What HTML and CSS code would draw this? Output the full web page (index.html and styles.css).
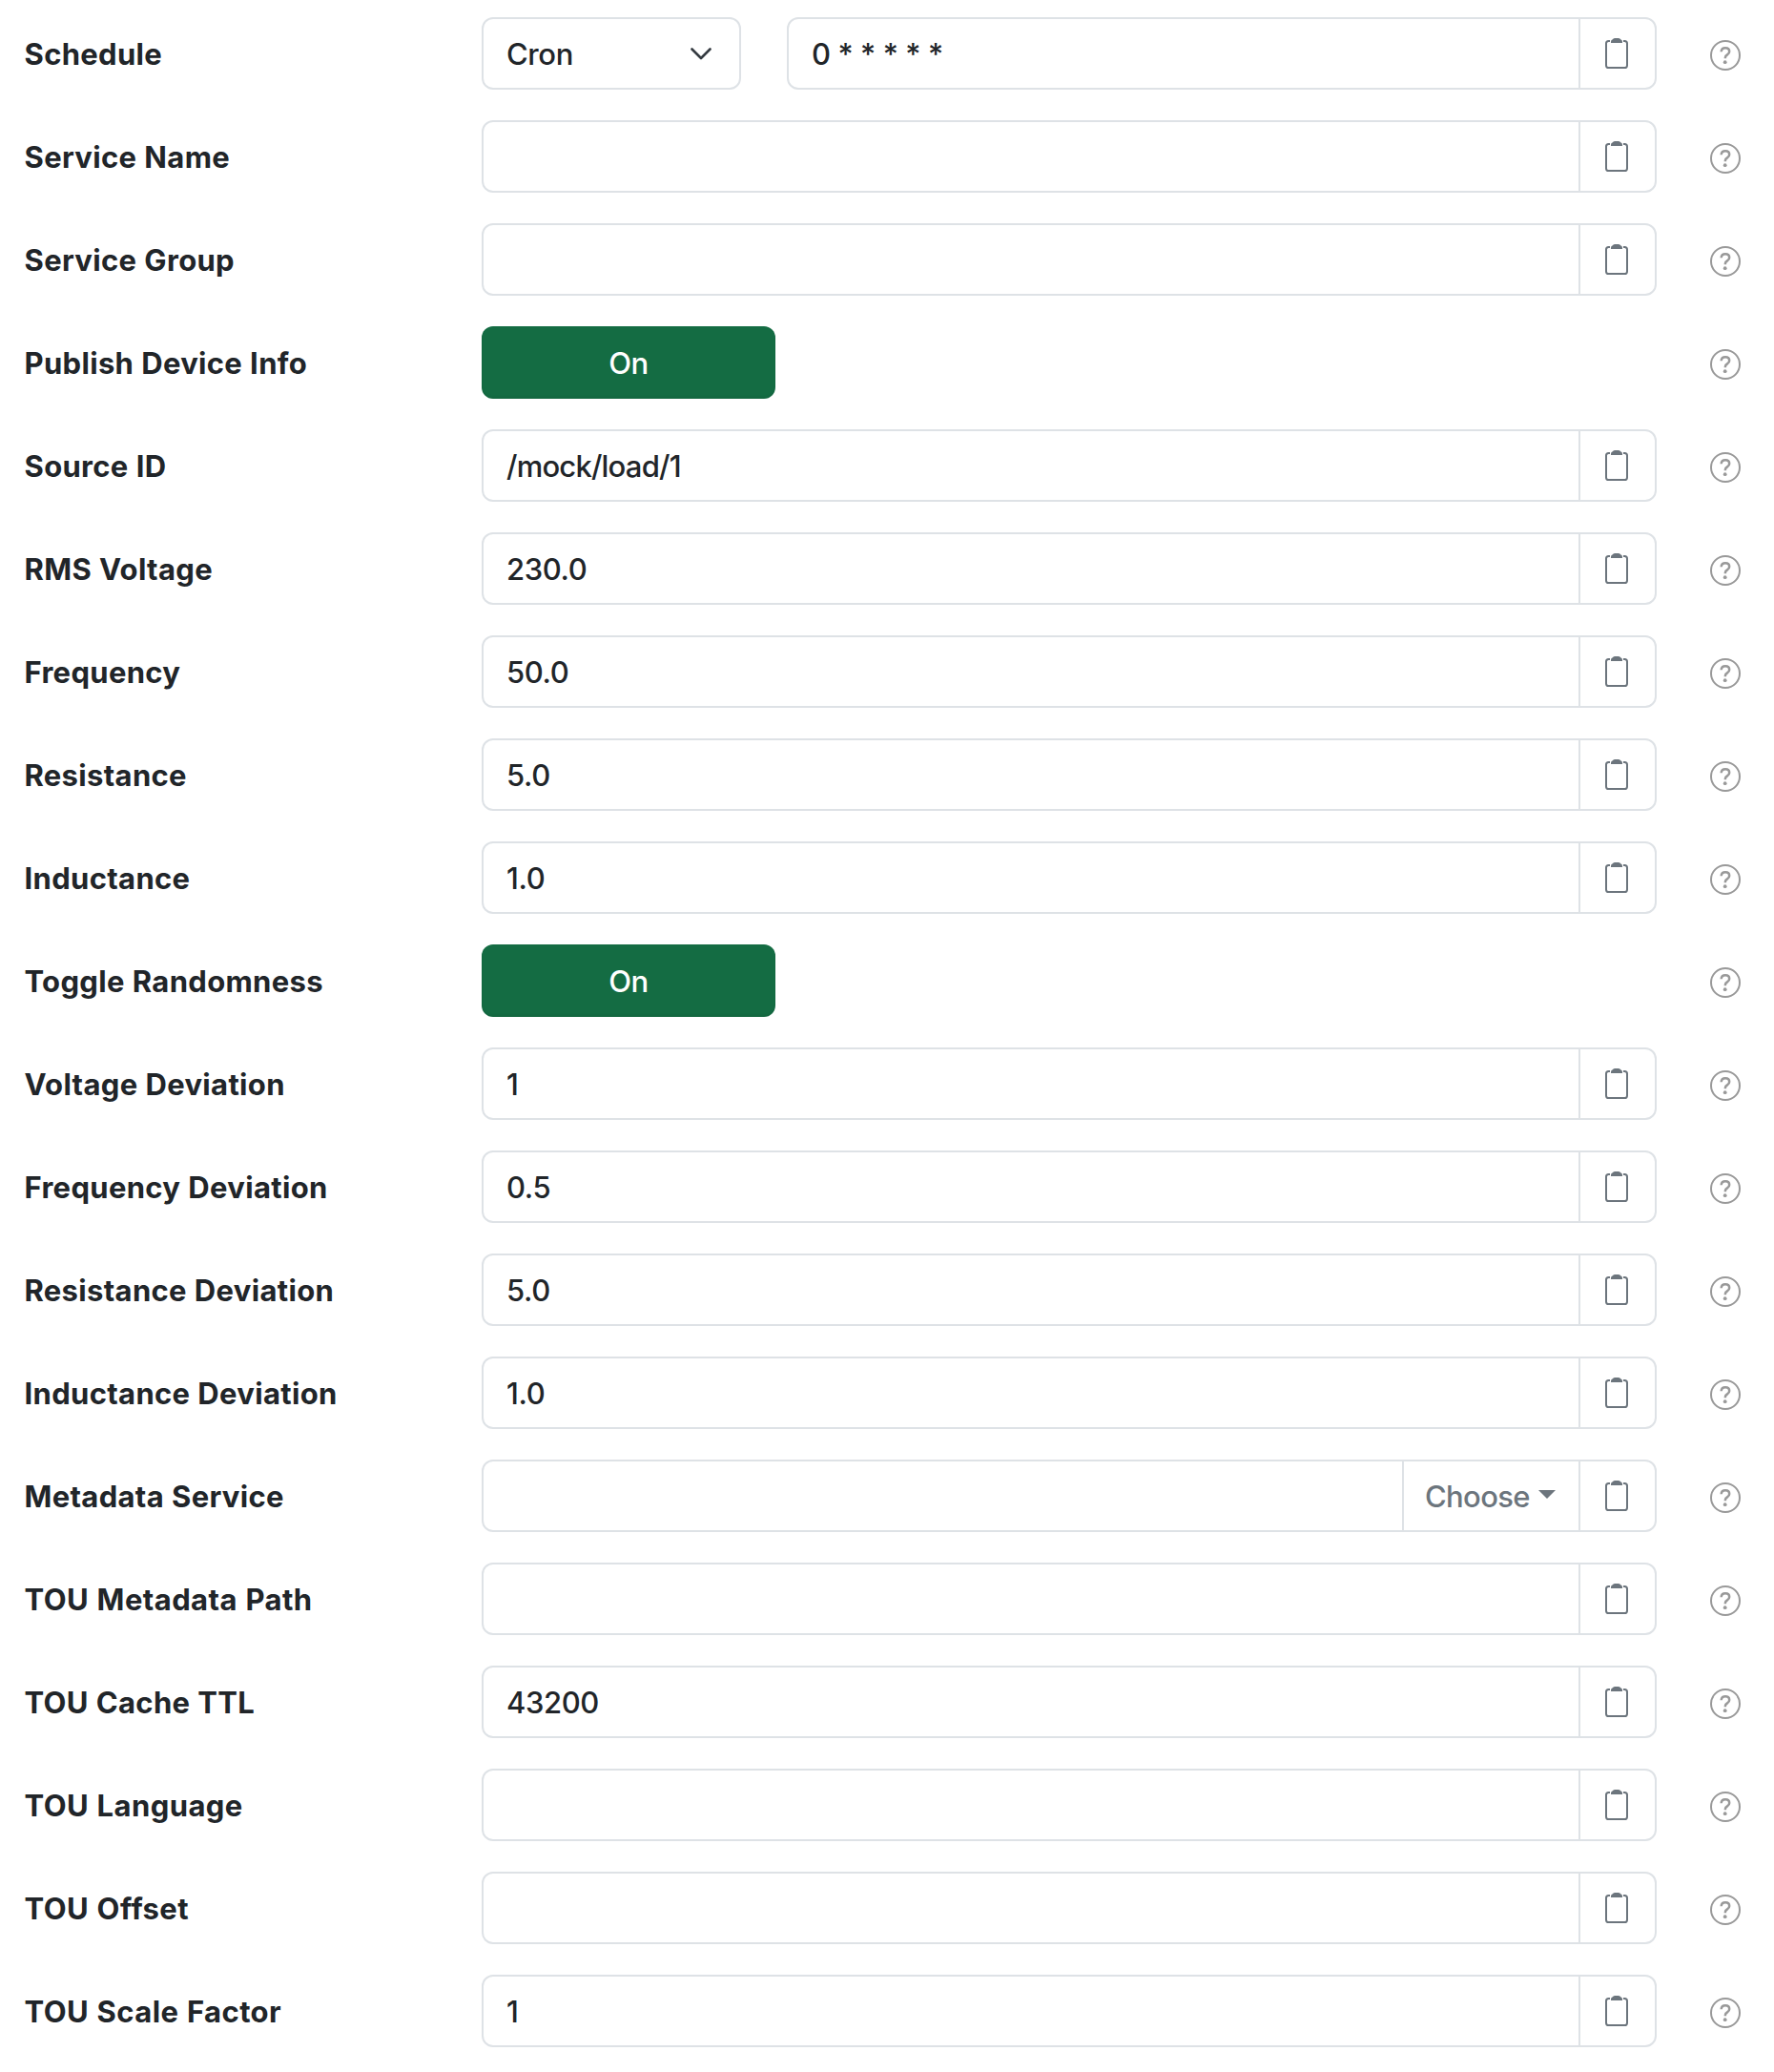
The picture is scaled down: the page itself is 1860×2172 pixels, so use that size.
FILE: index.html
```html
<!DOCTYPE html>
<html lang="en">
<head>
<meta charset="utf-8">
<title>Settings</title>
<link rel="stylesheet" href="styles.css">
</head>
<body>
<svg class="defs" aria-hidden="true">
  <symbol id="clipboard" viewBox="0 0 24 32">
    <path d="M5 3H3.600Q1 3 1 5.600V28.400Q1 31 3.600 31H20.400Q23 31 23 28.400V5.600Q23 3 20.400 3H19" fill="none" stroke="currentColor" stroke-width="2"/>
    <path d="M6 5V3.800Q6 2 7.500 1.500Q8.500 0 10 0H14Q15.500 0 16.500 1.500Q18 2 18 3.800V5Z" fill="currentColor"/>
  </symbol>
  <symbol id="help" viewBox="0 0 32 32">
    <circle cx="16" cy="16" r="15" fill="none" stroke="currentColor" stroke-width="2"/>
    <path d="M11.700 12.300C11.800 9.700 13.500 8.300 16 8.300C18.500 8.300 20.200 9.800 20.200 12C20.200 13.700 19.300 14.600 18 15.400C16.500 16.300 15.900 17 15.900 18.300V19.200" fill="none" stroke="currentColor" stroke-width="2.500"/>
    <circle cx="15.700" cy="23.200" r="1.900" fill="currentColor"/>
  </symbol>
</svg>
<main class="form">
  <div class="row"><div class="label"><span>Schedule</span></div><div class="control"><div class="select"><span>Cron</span><svg class="chevron" viewBox="0 0 22 13"><path d="M1.500 1.500L11 11L20.500 1.500" fill="none" stroke="#343a40" stroke-width="2.600" stroke-linecap="round" stroke-linejoin="round"/></svg></div><div class="group"><div class="value cron">0 * * * * *</div><div class="copy"><svg><use href="#clipboard"/></svg></div></div></div><svg class="help"><use href="#help"/></svg></div>
  <div class="row"><div class="label"><span>Service Name</span></div><div class="control"><div class="group"><div class="value"></div><div class="copy"><svg><use href="#clipboard"/></svg></div></div></div><svg class="help"><use href="#help"/></svg></div>
  <div class="row"><div class="label"><span>Service Group</span></div><div class="control"><div class="group"><div class="value"></div><div class="copy"><svg><use href="#clipboard"/></svg></div></div></div><svg class="help"><use href="#help"/></svg></div>
  <div class="row"><div class="label"><span>Publish Device Info</span></div><div class="control"><div class="toggle">On</div></div><svg class="help"><use href="#help"/></svg></div>
  <div class="row"><div class="label"><span>Source ID</span></div><div class="control"><div class="group"><div class="value path">/mock/load/1</div><div class="copy"><svg><use href="#clipboard"/></svg></div></div></div><svg class="help"><use href="#help"/></svg></div>
  <div class="row"><div class="label"><span>RMS Voltage</span></div><div class="control"><div class="group"><div class="value">230.0</div><div class="copy"><svg><use href="#clipboard"/></svg></div></div></div><svg class="help"><use href="#help"/></svg></div>
  <div class="row"><div class="label"><span>Frequency</span></div><div class="control"><div class="group"><div class="value">50.0</div><div class="copy"><svg><use href="#clipboard"/></svg></div></div></div><svg class="help"><use href="#help"/></svg></div>
  <div class="row"><div class="label"><span>Resistance</span></div><div class="control"><div class="group"><div class="value">5.0</div><div class="copy"><svg><use href="#clipboard"/></svg></div></div></div><svg class="help"><use href="#help"/></svg></div>
  <div class="row"><div class="label"><span>Inductance</span></div><div class="control"><div class="group"><div class="value">1.0</div><div class="copy"><svg><use href="#clipboard"/></svg></div></div></div><svg class="help"><use href="#help"/></svg></div>
  <div class="row"><div class="label"><span>Toggle Randomness</span></div><div class="control"><div class="toggle">On</div></div><svg class="help"><use href="#help"/></svg></div>
  <div class="row"><div class="label"><span>Voltage Deviation</span></div><div class="control"><div class="group"><div class="value">1</div><div class="copy"><svg><use href="#clipboard"/></svg></div></div></div><svg class="help"><use href="#help"/></svg></div>
  <div class="row"><div class="label"><span>Frequency Deviation</span></div><div class="control"><div class="group"><div class="value">0.5</div><div class="copy"><svg><use href="#clipboard"/></svg></div></div></div><svg class="help"><use href="#help"/></svg></div>
  <div class="row"><div class="label"><span>Resistance Deviation</span></div><div class="control"><div class="group"><div class="value">5.0</div><div class="copy"><svg><use href="#clipboard"/></svg></div></div></div><svg class="help"><use href="#help"/></svg></div>
  <div class="row"><div class="label"><span>Inductance Deviation</span></div><div class="control"><div class="group"><div class="value">1.0</div><div class="copy"><svg><use href="#clipboard"/></svg></div></div></div><svg class="help"><use href="#help"/></svg></div>
  <div class="row"><div class="label"><span>Metadata Service</span></div><div class="control"><div class="group"><div class="value"></div><div class="choose"><span>Choose</span><i class="caret"></i></div><div class="copy"><svg><use href="#clipboard"/></svg></div></div></div><svg class="help"><use href="#help"/></svg></div>
  <div class="row"><div class="label tou"><span>TOU Metadata Path</span></div><div class="control"><div class="group"><div class="value"></div><div class="copy"><svg><use href="#clipboard"/></svg></div></div></div><svg class="help"><use href="#help"/></svg></div>
  <div class="row"><div class="label"><span>TOU Cache TTL</span></div><div class="control"><div class="group"><div class="value">43200</div><div class="copy"><svg><use href="#clipboard"/></svg></div></div></div><svg class="help"><use href="#help"/></svg></div>
  <div class="row"><div class="label tou"><span>TOU Language</span></div><div class="control"><div class="group"><div class="value"></div><div class="copy"><svg><use href="#clipboard"/></svg></div></div></div><svg class="help"><use href="#help"/></svg></div>
  <div class="row"><div class="label tou"><span>TOU Offset</span></div><div class="control"><div class="group"><div class="value"></div><div class="copy"><svg><use href="#clipboard"/></svg></div></div></div><svg class="help"><use href="#help"/></svg></div>
  <div class="row"><div class="label tou"><span>TOU Scale Factor</span></div><div class="control"><div class="group"><div class="value">1</div><div class="copy"><svg><use href="#clipboard"/></svg></div></div></div><svg class="help"><use href="#help"/></svg></div>
</main>
</body>
</html>
```
FILE: styles.css
```css
* { box-sizing: border-box; }
body {
  margin: 0;
  background: #fff;
  color: #212529;
  font: 450 31px/48px Inter, "Liberation Sans", sans-serif;
  letter-spacing: -0.4px;
}
.defs { display: none; }
.form {
  display: flex;
  flex-direction: column;
  gap: 32px;
  padding: 18px 35px 26px 25px;
}
.row {
  display: grid;
  grid-template-columns: 480px 1232px 1fr;
  height: 76px;
}
.label {
  padding: 15px 0 0 0.5px;
  font-weight: 700;
  letter-spacing: 0.33px;
  word-spacing: 0.3px;
  white-space: nowrap;
}
.tou { letter-spacing: 0.42px; word-spacing: 0.8px; }
.control { display: flex; gap: 48px; }
.select, .group {
  display: flex;
  border: 2px solid #dee2e6;
  border-radius: 12px;
}
.select {
  justify-content: space-between;
  width: 272px;
  padding: 13px 29px 0 24px;
}
.chevron { width: 22px; height: 13px; margin-top: 17px; }
.group { flex: 1; }
.value {
  flex: 1;
  padding: 13px 24px 0;
}
.path { letter-spacing: -0.8px; }
.copy {
  display: flex;
  align-items: center;
  width: 80px;
  padding-left: 26px;
  border-left: 2px solid #dee2e6;
  color: #6c757d;
}
.copy svg { width: 24px; height: 32px; }
.choose {
  display: flex;
  gap: 9px;
  width: 185px;
  padding: 13px 0 0 22px;
  border-left: 2px solid #dee2e6;
  color: #6c757d;
  letter-spacing: -0.65px;
}
.caret {
  height: 9px;
  margin-top: 17px;
  border: 9px solid transparent;
  border-top-color: currentColor;
  border-bottom: 0;
}
.toggle {
  width: 308px;
  padding-top: 15px;
  border-radius: 12px;
  background: #146c43;
  box-shadow: inset 0 -2px 3px rgba(0, 0, 0, .06);
  color: #fff;
  text-align: center;
}
.help {
  width: 32px;
  height: 32px;
  margin-top: 4px;
  place-self: center end;
  color: #999;
}
```
